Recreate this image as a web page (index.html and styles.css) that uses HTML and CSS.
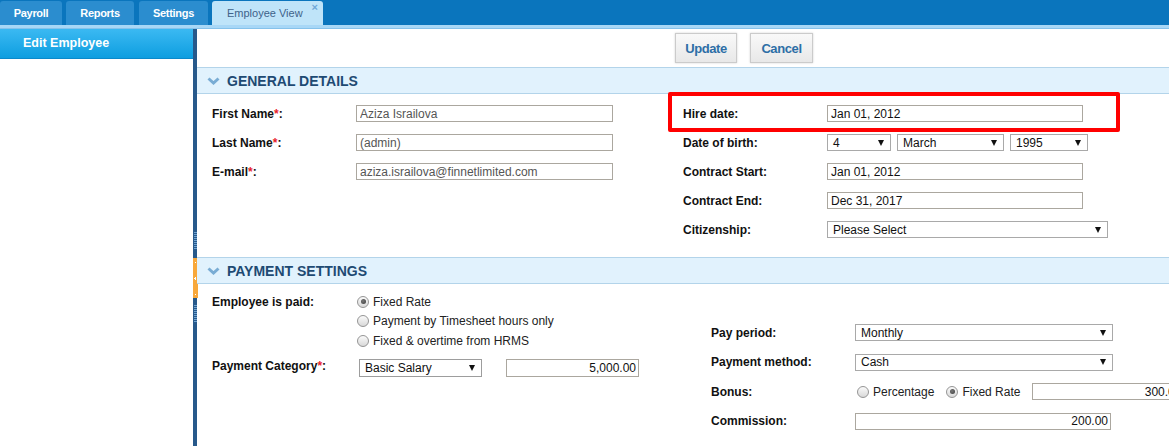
FILE: index.html
```html
<!DOCTYPE html>
<html>
<head>
<meta charset="utf-8">
<title>Employee View</title>
<link rel="stylesheet" href="styles.css">
</head>
<body>
<div class="topbar">
  <div class="tab tab-payroll">Payroll</div>
  <div class="tab tab-reports">Reports</div>
  <div class="tab tab-settings">Settings</div>
  <div class="tab active">Employee View <span class="close">×</span></div>
</div>
<div class="topline"></div>
<div class="layout">
  <aside class="sidebar">
    <div class="side-btn">Edit Employee</div>
  </aside>
  <div class="splitter">
    <div class="grip"></div>
    <div class="handle"></div>
    <div class="grip"></div>
  </div>
  <main class="main">
    <div class="actions">
      <button class="btn btn-update">Update</button>
      <button class="btn btn-cancel">Cancel</button>
    </div>

    <section class="section">
      <div class="sec-head">
        <svg class="chev" width="13" height="8" viewBox="0 0 13 8"><polyline points="1.5,1.5 6.5,6 11.5,1.5" fill="none" stroke="#79acd4" stroke-width="3" stroke-linejoin="miter"/></svg>
        <span>GENERAL DETAILS</span>
      </div>
      <div class="sec-body general">
        <div class="col">
          <div class="row"><label class="lbl">First Name<span class="req">*</span>:</label><input class="inp inp-wide muted" type="text" value="Aziza Israilova" readonly></div>
          <div class="row"><label class="lbl">Last Name<span class="req">*</span>:</label><input class="inp inp-wide muted" type="text" value="(admin)" readonly></div>
          <div class="row"><label class="lbl">E-mail<span class="req">*</span>:</label><input class="inp inp-wide muted" type="text" value="aziza.israilova@finnetlimited.com" readonly></div>
        </div>
        <div class="col">
          <div class="row highlight"><label class="lbl normal">Hire date:</label><input class="inp inp-date" type="text" value="Jan 01, 2012" readonly></div>
          <div class="row"><label class="lbl normal">Date of birth:</label>
            <div class="sel sel-day"><span>4</span><i class="arr"></i></div>
            <div class="sel sel-month"><span>March</span><i class="arr"></i></div>
            <div class="sel sel-year"><span>1995</span><i class="arr"></i></div>
          </div>
          <div class="row"><label class="lbl normal">Contract Start:</label><input class="inp inp-date" type="text" value="Jan 01, 2012" readonly></div>
          <div class="row"><label class="lbl normal">Contract End:</label><input class="inp inp-date" type="text" value="Dec 31, 2017" readonly></div>
          <div class="row"><label class="lbl normal">Citizenship:</label><div class="sel sel-citizen"><span>Please Select</span><i class="arr"></i></div></div>
        </div>
      </div>
    </section>

    <section class="section">
      <div class="sec-head">
        <svg class="chev" width="13" height="8" viewBox="0 0 13 8"><polyline points="1.5,1.5 6.5,6 11.5,1.5" fill="none" stroke="#79acd4" stroke-width="3" stroke-linejoin="miter"/></svg>
        <span>PAYMENT SETTINGS</span>
      </div>
      <div class="sec-body payment">
        <div class="col col-pay-left">
          <div class="paid-row">
            <label class="lbl paid-lbl">Employee is paid:</label>
            <div class="radio-group">
              <div class="ropt"><span class="radio checked"></span>Fixed Rate</div>
              <div class="ropt"><span class="radio"></span>Payment by Timesheet hours only</div>
              <div class="ropt"><span class="radio"></span>Fixed &amp; overtime from HRMS</div>
            </div>
          </div>
          <div class="cat-row">
            <label class="lbl cat-lbl">Payment Category<span class="req">*</span>:</label>
            <div class="sel sel-cat"><span>Basic Salary</span><i class="arr"></i></div>
            <input class="inp inp-amount num" type="text" value="5,000.00" readonly>
          </div>
        </div>
        <div class="col col-pay-right">
          <div class="prow"><label class="lbl">Pay period:</label><div class="sel sel-pay"><span>Monthly</span><i class="arr"></i></div></div>
          <div class="prow"><label class="lbl">Payment method:</label><div class="sel sel-pay"><span>Cash</span><i class="arr"></i></div></div>
          <div class="prow"><label class="lbl">Bonus:</label>
            <div class="ropt inline first"><span class="radio"></span>Percentage</div>
            <div class="ropt inline"><span class="radio checked"></span>Fixed Rate</div>
            <input class="inp inp-bonus num" type="text" value="300.00" readonly>
          </div>
          <div class="prow"><label class="lbl">Commission:</label><input class="inp inp-comm num" type="text" value="200.00" readonly></div>
        </div>
      </div>
    </section>
  </main>
</div>
</body>
</html>
```

FILE: styles.css
```css
*, *::before, *::after { box-sizing: border-box; }
html, body { margin: 0; padding: 0; overflow: hidden; }
body {
  width: 1169px;
  height: 446px;
  font-family: "Liberation Sans", Arial, sans-serif;
  font-size: 12px;
  color: #111;
  background: #fff;
}

/* top tabs */
.topbar {
  height: 25px;
  background: #0a75bd;
  display: flex;
  align-items: flex-end;
}
.tab {
  height: 24px;
  line-height: 24px;
  background: #2b8dcf;
  color: #fff;
  font-weight: bold;
  font-size: 11px;
  letter-spacing: -0.3px;
  text-align: center;
  border-radius: 3px 3px 0 0;
  margin-right: 4px;
}
.tab-payroll { width: 62px; }
.tab-reports { width: 68px; margin-right: 5px; }
.tab-settings { width: 69px; }
.tab.active {
  width: 111px;
  background: #bfe4f9;
  color: #40628a;
  font-weight: normal;
  letter-spacing: 0;
  text-align: left;
  padding-left: 15px;
  position: relative;
}
.close {
  position: absolute;
  top: -6px;
  right: 5px;
  color: #6fa8d8;
  font-size: 11px;
  font-weight: bold;
}
.topline {
  height: 4px;
  background: #a8d7f6;
  border-bottom: 1px solid #86c2eb;
}

/* layout */
.layout {
  display: flex;
  height: 417px;
}
.sidebar {
  width: 193px;
  flex: none;
}
.side-btn {
  height: 30px;
  line-height: 29px;
  padding-left: 23px;
  color: #fff;
  font-weight: bold;
  font-size: 12.5px;
  background: linear-gradient(#3bb9f2, #0e9ee0);
  border-bottom: 1px solid #0b89cb;
}
.splitter {
  width: 4px;
  flex: none;
  background: #27598b;
  display: flex;
  flex-direction: column;
  align-items: center;
  padding-top: 203px;
}
.grip {
  width: 3px;
  height: 18px;
  background: repeating-linear-gradient(to bottom, #6fa2d0 0 1px, transparent 1px 2px);
}
.handle {
  width: 5px;
  height: 40px;
  margin: 8px 0 7px;
  background-color: #f8a83b;
  background-image: linear-gradient(#fff, #fff), linear-gradient(#fff, #fff), linear-gradient(#fff, #fff), linear-gradient(#fff, #fff);
  background-size: 1px 1px, 2px 1px, 1px 3px, 1px 1px;
  background-position: 2px 4px, 1px 20px, 2px 19px, 2px 36px;
  background-repeat: no-repeat;
}
.main {
  flex: 1;
  min-width: 0;
}

/* buttons */
.actions {
  display: flex;
  gap: 13px;
  padding: 4px 0 4px 478px;
}
.btn {
  height: 30px;
  padding: 0;
  border: 1px solid #cbcbcb;
  background: linear-gradient(#f9f9f9, #e8e8e8);
  box-shadow: 0 0 2px rgba(0, 0, 0, 0.18);
  color: #2d6ea6;
  font-family: "Liberation Sans", Arial, sans-serif;
  font-weight: bold;
  font-size: 13px;
  letter-spacing: -0.4px;
}
.btn-update { width: 62px; }
.btn-cancel { width: 63px; }

/* sections */
.sec-head {
  height: 27px;
  background: #e1f2fd;
  border-top: 1px solid #b3d4ea;
  border-bottom: 1px solid #b3d4ea;
  display: flex;
  align-items: center;
  padding-left: 10px;
  gap: 7px;
  color: #1e4a73;
  font-weight: bold;
  font-size: 14px;
}
.chev { display: block; }

.sec-body { display: grid; padding-left: 15px; }
.general {
  grid-template-columns: 471px 1fr;
  padding-top: 5px;
  padding-bottom: 13px;
}
.row {
  display: flex;
  align-items: center;
  height: 29px;
}
.lbl {
  width: 144px;
  flex: none;
  font-weight: bold;
  color: #111;
}
.req { color: #e8202a; }

.inp {
  height: 17px;
  border: 1px solid #aba79f;
  padding: 0 3px;
  font-family: "Liberation Sans", Arial, sans-serif;
  font-size: 12px;
  color: #111;
  background: #fff;
  outline: none;
  margin: 0;
  flex: none;
}
.muted { color: #555; }
.inp-wide { width: 257px; }
.inp-date { width: 256px; }
.num { text-align: right; padding-right: 2px; }

.sel {
  height: 17px;
  border: 1px solid #a9a9a9;
  display: flex;
  align-items: center;
  justify-content: space-between;
  padding: 0 6px 0 5px;
  background: #fff;
  color: #111;
  flex: none;
}
.arr {
  width: 0;
  height: 0;
  border-left: 3px solid transparent;
  border-right: 3px solid transparent;
  border-top: 6px solid #111;
}
.sel-day { width: 64px; margin-right: 6px; }
.sel-month { width: 107px; margin-right: 6px; }
.sel-year { width: 78px; }
.sel-citizen { width: 281px; }

.highlight { position: relative; }
.highlight::after {
  content: "";
  position: absolute;
  left: -15px;
  top: -7px;
  width: 452px;
  height: 40px;
  border: 4px solid #ff0000;
  border-radius: 2px;
}

/* payment */
.payment { grid-template-columns: 499px 1fr; }
.col-pay-left { padding-top: 8px; }
.paid-row { display: flex; }
.paid-lbl { width: 145px; line-height: 19.5px; padding-top: 1px; }
.radio-group { display: flex; flex-direction: column; }
.ropt {
  display: flex;
  align-items: center;
  gap: 4px;
  height: 19.5px;
  color: #222;
  white-space: nowrap;
  flex: none;
}
.radio {
  width: 12px;
  height: 12px;
  border-radius: 50%;
  border: 1px solid #959595;
  background: linear-gradient(#fafafa, #d9d9d9);
  position: relative;
  flex: none;
}
.radio.checked::after {
  content: "";
  position: absolute;
  left: 2.5px;
  top: 2.5px;
  width: 5px;
  height: 5px;
  border-radius: 50%;
  background: radial-gradient(circle at 40% 40%, #777, #3c3c3c);
}
.cat-row {
  display: flex;
  align-items: center;
  margin-top: 8px;
  height: 18px;
}
.cat-lbl { width: 147px; padding-bottom: 3px; }
.sel-cat { width: 123px; height: 18px; border-color: #9d9d9d; }
.inp-amount { width: 133px; height: 18px; margin-left: 24px; }

.col-pay-right { padding-top: 34px; }
.prow {
  display: flex;
  align-items: center;
  height: 29.5px;
}
.sel-pay { width: 258px; }
.ropt.inline { margin-right: 12px; }
.ropt.inline.first { margin-left: 2px; }
.inp-bonus { width: 152px; }
.inp-comm { width: 256px; }
```
